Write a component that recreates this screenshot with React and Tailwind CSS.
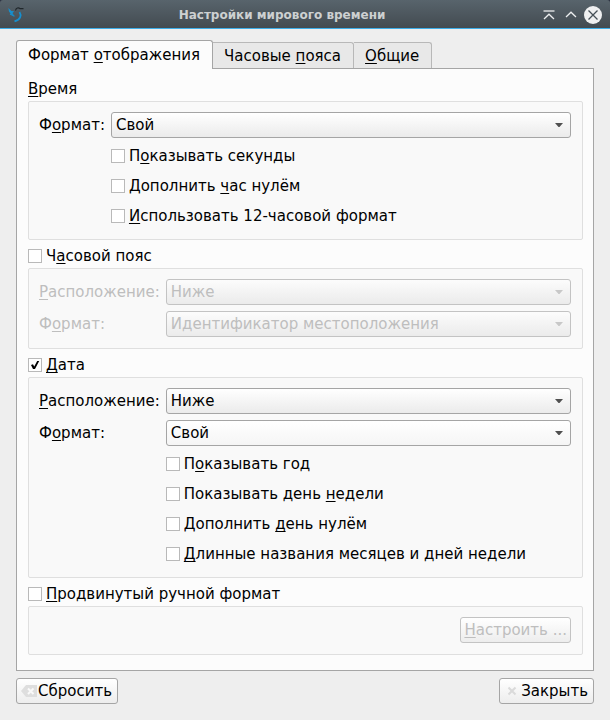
import React, { useState } from 'react';

// Underlined mnemonic letter
const Key = ({ children }) => (
  <span className="underline decoration-1 underline-offset-2 [text-decoration-skip-ink:none]">{children}</span>
);

const Check = ({ id, checked = false, children }) => {
  const [on, setOn] = useState(checked);

  return (
    <div className="flex h-6 items-center">
      <span className="grid shrink-0">
        <input
          id={id}
          type="checkbox"
          checked={on}
          onChange={(e) => setOn(e.target.checked)}
          className="col-start-1 row-start-1 size-3.5 appearance-none border border-[#b9b9b9] bg-white"
        />
        {on && (
          <svg viewBox="0 0 14 14" className="pointer-events-none col-start-1 row-start-1 size-3.5">
            <path d="M3 7 L5 6.2 L6.2 8.4 L9.2 3 L11.2 3 L7 11 L5 11 Z" fill="#000" />
          </svg>
        )}
      </span>
      <label htmlFor={id} className="pl-1 whitespace-nowrap">{children}</label>
    </div>
  );
};

const Combo = ({ id, value, disabled = false, light = false }) => (
  <div className="grid min-w-0">
    <select
      id={id}
      disabled={disabled}
      defaultValue={value}
      className={`col-start-1 row-start-1 h-[26px] w-full appearance-none rounded-[3px] border bg-linear-to-b pl-1 pr-6 ${
        disabled
          ? 'border-[#c3c3c3] from-[#fcfcfc] text-[#bebebe] opacity-100'
          : 'border-[#a5a5a5] from-white text-black'
      } ${light ? 'to-[#f5f5f5]' : 'to-[#ebebeb]'}`}
    >
      <option>{value}</option>
    </select>
    <svg
      viewBox="0 0 8 4"
      className={`pointer-events-none col-start-1 row-start-1 mr-2 h-1 w-2 self-center justify-self-end ${
        disabled ? 'fill-[#c8c8c8]' : 'fill-[#505050]'
      }`}
    >
      <path d="M0 0 H8 L4.5 4 H3.5 Z" />
    </svg>
  </div>
);

const Group = ({ title, children }) => (
  <section className="mt-1">
    {title}
    <div className="rounded-[2px] border border-[#dfdfdf] bg-[#f9f9f9] pt-2.5 pr-[11px] pb-[11px] pl-2.5">
      {children}
    </div>
  </section>
);

const Form = ({ children }) => (
  <div className="grid grid-cols-[auto_minmax(0,1fr)] items-center gap-1.5">{children}</div>
);

const buttonStyle =
  'flex h-[26px] items-center rounded-[3px] border bg-linear-to-b from-white to-[#ededed] whitespace-nowrap';

const TitleBar = () => (
  <header className="bg-[#2b3040]">
    <div className="grid h-[29px] grid-cols-[auto_1fr_auto] items-center rounded-t-[3px] border-b border-[#3daee9] bg-linear-to-b from-[#58646c] to-[#434b51] px-2 pt-0.5">
      <svg viewBox="0 0 16 16" className="size-4" fill="none">
        <path d="M0.3 1 L3.5 4 L6.2 4.2 L4.5 6 L6 8.6 L3 7.2 L1 4.5 Z" fill="#168fce" />
        <path d="M2 7 L6.5 9.3" stroke="#168fce" strokeWidth="1.2" />
        <path d="M11.5 5 C13.8 8.5 12.5 12.5 6.5 14.3" stroke="#168fce" strokeWidth="1.8" />
        <path d="M7.5 3.5 C8 0.8 10.5 0.2 12 1.6 L15.5 1.6" stroke="#20272b" strokeWidth="1.2" />
      </svg>
      <h1 className="text-center text-xs font-bold whitespace-nowrap text-[#cdd0d1]">
        Настройки мирового времени
      </h1>
      <div className="flex items-center gap-1">
        <button aria-label="Свернуть">
          <svg viewBox="0 0 18 18" className="size-[18px]" fill="none" stroke="#eceeef" strokeWidth="1.3">
            <path d="M3.5 5 H14.5" stroke="#b5babd" strokeWidth="2" />
            <path d="M4 13 L9 8.2 L14 13" />
          </svg>
        </button>
        <button aria-label="Развернуть">
          <svg viewBox="0 0 18 18" className="size-[18px]" fill="none" stroke="#eceeef" strokeWidth="1.3">
            <path d="M4 11 L9 6.2 L14 11" />
          </svg>
        </button>
        <button aria-label="Закрыть окно">
          <svg viewBox="0 0 18 18" className="size-[18px]" fill="none">
            <circle cx="9" cy="9" r="9" fill="#eff0f1" />
            <path d="M4.5 4.5 L13.5 13.5 M13.5 4.5 L4.5 13.5" stroke="#465057" strokeWidth="1.3" />
          </svg>
        </button>
      </div>
    </div>
  </header>
);

const App = () => (
  <div className="min-h-screen bg-[#eeeeee] font-['DejaVu_Sans',sans-serif] text-[15px] leading-6 text-black">
    <TitleBar />
    <main className="px-4 pt-[11px] pb-4">
      <div role="tablist" className="flex items-end">
        <button
          role="tab"
          aria-selected="true"
          className="-mb-px h-[29px] rounded-t-[3px] border border-b-0 border-[#a5a5a5] bg-[#fcfcfc] pr-3 pl-[11px] whitespace-nowrap"
        >
          Формат <Key>о</Key>тображения
        </button>
        <button
          role="tab"
          aria-selected="false"
          className="h-[26px] rounded-tr-[3px] border-t border-r border-[#b8b8b8] bg-[#e8e8e8] pr-3 pl-[11px] whitespace-nowrap"
        >
          Часовые <Key>п</Key>ояса
        </button>
        <button
          role="tab"
          aria-selected="false"
          className="h-[26px] rounded-tr-[3px] border-t border-r border-[#b8b8b8] bg-[#e8e8e8] pr-3 pl-[11px] whitespace-nowrap"
        >
          <Key>О</Key>бщие
        </button>
      </div>

      <div role="tabpanel" className="border border-[#a5a5a5] bg-[#fcfcfc] pt-1 pr-2.5 pb-[15px] pl-[11px]">
        <Group title={<h2><Key>В</Key>ремя</h2>}>
          <Form>
            <label htmlFor="time-format">Ф<Key>о</Key>рмат:</label>
            <Combo id="time-format" value="Свой" />
            <div className="col-start-2 flex flex-col gap-1.5">
              <Check id="seconds">П<Key>о</Key>казывать секунды</Check>
              <Check id="pad-hour">Дополнить <Key>ч</Key>ас нулём</Check>
              <Check id="ampm"><Key>И</Key>спользовать 12-часовой формат</Check>
            </div>
          </Form>
        </Group>

        <Group title={<Check id="timezone">Ч<Key>а</Key>совой пояс</Check>}>
          <Form>
            <label htmlFor="tz-position" className="text-[#bebebe]"><Key>Р</Key>асположение:</label>
            <Combo id="tz-position" value="Ниже" disabled />
            <label htmlFor="tz-format" className="text-[#bebebe]">Ф<Key>о</Key>рмат:</label>
            <Combo id="tz-format" value="Идентификатор местоположения" disabled />
          </Form>
        </Group>

        <Group title={<Check id="date" checked><Key>Д</Key>ата</Check>}>
          <Form>
            <label htmlFor="date-position"><Key>Р</Key>асположение:</label>
            <Combo id="date-position" value="Ниже" />
            <label htmlFor="date-format">Ф<Key>о</Key>рмат:</label>
            <Combo id="date-format" value="Свой" light />
            <div className="col-start-2 flex flex-col gap-1.5">
              <Check id="year">П<Key>о</Key>казывать год</Check>
              <Check id="weekday">Показывать день <Key>н</Key>едели</Check>
              <Check id="pad-day">Дополнить <Key>д</Key>ень нулём</Check>
              <Check id="long-names"><Key>Д</Key>линные названия месяцев и дней недели</Check>
            </div>
          </Form>
        </Group>

        <Group title={<Check id="advanced"><Key>П</Key>родвинутый ручной формат</Check>}>
          <div className="flex justify-end">
            <button disabled className={`${buttonStyle} border-[#c3c3c3] px-[3px] text-[#bebebe]`}>
              <span><Key>Н</Key>астроить ...</span>
            </button>
          </div>
        </Group>
      </div>

      <div className="mt-[7px] flex justify-between">
        <button className={`${buttonStyle} gap-px border-[#a5a5a5] pr-[5px] pl-1`}>
          <svg viewBox="0 0 16 16" className="size-4">
            <path d="M0 8 L5 2 H16 V14 H5 Z" fill="#dedede" />
            <path d="M7 5.5 L12.5 11 M12.5 5.5 L7 11" stroke="#fafafa" strokeWidth="2" />
          </svg>
          Сбросить
        </button>
        <button className={`${buttonStyle} gap-px border-[#a5a5a5] pr-[5px] pl-1`}>
          <svg viewBox="0 0 16 16" className="size-4">
            <path d="M4.5 4.5 L11.5 11.5 M11.5 4.5 L4.5 11.5" stroke="#dadada" strokeWidth="2" />
          </svg>
          Закрыть
        </button>
      </div>
    </main>
  </div>
);

export default App;
